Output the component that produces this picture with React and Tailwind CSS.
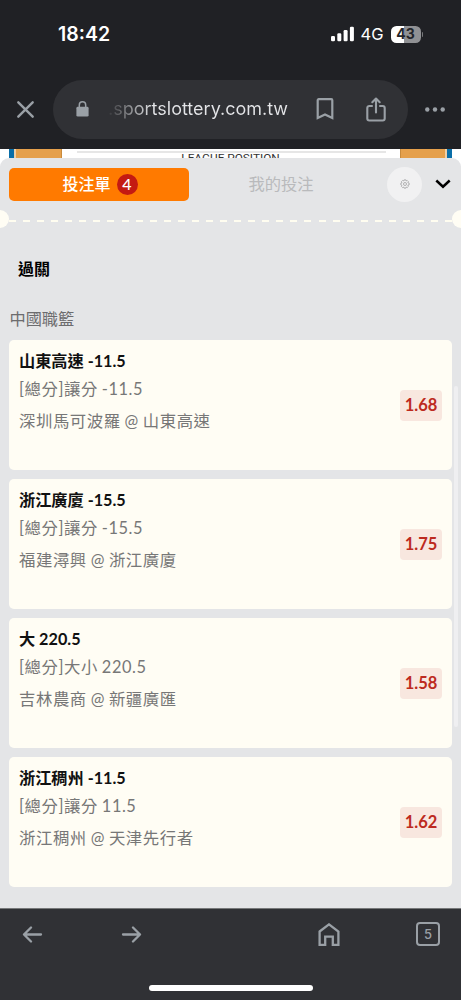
const bets = [
  { id: 1, pick: '山東高速 -11.5', market: '[總分]讓分 -11.5', match: '深圳馬可波羅 @ 山東高速', odds: '1.68' },
  { id: 2, pick: '浙江廣廈 -15.5', market: '[總分]讓分 -15.5', match: '福建潯興 @ 浙江廣廈', odds: '1.75' },
  { id: 3, pick: '大 220.5', market: '[總分]大小 220.5', match: '吉林農商 @ 新疆廣匯', odds: '1.58' },
  { id: 4, pick: '浙江稠州 -11.5', market: '[總分]讓分 11.5', match: '浙江稠州 @ 天津先行者', odds: '1.62' },
];

function StatusBar() {
  return (
    <div className="flex h-[68px] items-center pl-[58px] pr-[38px] text-white">
      <span className="pt-[2px] text-[19.5px] font-semibold leading-none">18:42</span>
      <svg className="ml-auto" width="24" height="16" viewBox="0 0 24 16" fill="currentColor">
        <rect x="0" y="10" width="4" height="5.3" rx="1.2" />
        <rect x="6.3" y="7.2" width="4" height="8.1" rx="1.2" />
        <rect x="12.6" y="4" width="4" height="11.3" rx="1.2" />
        <rect x="18.9" y="0.8" width="4" height="14.5" rx="1.2" />
      </svg>
      <span className="ml-[6px] w-[24px] pt-px text-[16.5px] font-normal leading-none">4G</span>
      <div className="ml-[6px] flex items-center">
        <div className="flex h-[17px] w-[30px] items-center justify-center rounded-[5.5px] bg-[linear-gradient(90deg,#fff_43%,#909194_43%)] text-[14px] font-bold leading-none text-[#242529]">
          43
        </div>
        <div className="ml-px h-[5px] w-[1.5px] rounded-r-full bg-[#77787b]"></div>
      </div>
    </div>
  );
}

function AddressBar() {
  return (
    <div className="flex h-[81px] items-center pt-[1px]">
      <svg className="ml-[16px]" width="19" height="19" viewBox="0 0 19 19" fill="none" stroke="#9aa0a6" strokeWidth="2.4" strokeLinecap="round">
        <path d="M2.3 2.3 16.7 16.7M16.7 2.3 2.3 16.7" />
      </svg>
      <div className="ml-[18px] flex h-[59px] w-[355px] items-center rounded-full bg-[#303135]">
        <svg className="ml-[23px]" width="13" height="16" viewBox="0 0 13 16">
          <rect x="0.4" y="5.8" width="12.2" height="9.8" rx="1.4" fill="#9aa0a6" />
          <path d="M3.3 6.5V4a3.2 3.2 0 0 1 6.4 0v2.5" fill="none" stroke="#9aa0a6" strokeWidth="1.5" />
        </svg>
        <span className="ml-[19px] w-[180px] whitespace-nowrap bg-[linear-gradient(90deg,#37383c_0%,#e4e5e8_25%)] bg-clip-text text-[18px] leading-[26px] text-transparent">
          .sportslottery.com.tw
        </span>
        <svg className="ml-[28px]" width="18" height="22" viewBox="0 0 18 22" fill="none" stroke="#9aa0a6" strokeWidth="2.2">
          <path d="M1.7 2.2a1 1 0 0 1 1-1h12.6a1 1 0 0 1 1 1V20L9 16.4 1.7 20z" />
        </svg>
        <svg className="ml-[32px]" width="20" height="25" viewBox="0 0 20 25" fill="none" stroke="#9aa0a6" strokeWidth="2.1" strokeLinecap="round" strokeLinejoin="round">
          <path d="M6 9H3.3A2 2 0 0 0 1.3 11v10.5a2 2 0 0 0 2 2h13.4a2 2 0 0 0 2-2V11a2 2 0 0 0-2-2H14" />
          <path d="M10 15.5V2M6.3 5.2 10 1.5l3.7 3.7" />
        </svg>
      </div>
      <svg className="ml-[17px]" width="20" height="5" viewBox="0 0 20 5" fill="#9aa0a6">
        <circle cx="2.3" cy="2.5" r="2.2" />
        <circle cx="10" cy="2.5" r="2.2" />
        <circle cx="17.7" cy="2.5" r="2.2" />
      </svg>
    </div>
  );
}

// Slice of the page left visible behind the bet slip
function PageBehind() {
  return (
    <div className="flex h-[17px] justify-between bg-white px-[9px]">
      <div className="flex">
        <div className="w-[5px] bg-[#0a6ea8]"></div>
        <div className="w-[2px] bg-[#f0d0a8]"></div>
        <div className="w-[46px] border-r border-[#c88a3c] bg-[#e5a04c]"></div>
      </div>
      <div className="w-[309px] pt-[2px] text-center">
        <div className="h-[2px] bg-[#e6e6e6]"></div>
        <div className="h-[13px] whitespace-nowrap pr-px font-['Roboto',sans-serif] text-[11.8px] leading-[11px] text-[#333]">LEAGUE POSITION</div>
      </div>
      <div className="flex">
        <div className="w-[45px] border-l border-[#c88a3c] bg-[#e5a04c]"></div>
        <div className="w-[2px] bg-[#f0d0a8]"></div>
        <div className="w-[5px] bg-[#0a6ea8]"></div>
      </div>
    </div>
  );
}

function SlipTabs() {
  return (
    <div className="flex h-[52px] items-center pl-[9px] pr-[10px]">
      <button className="flex h-[33px] w-[180px] items-center justify-center gap-[6px] rounded-[5px] bg-[#ff7a00] pl-[2px] text-[16px] font-medium text-white">
        投注單
        <span className="flex h-[21px] w-[21px] items-center justify-center rounded-full bg-[#c41a12] text-[16px] leading-none">4</span>
      </button>
      <button className="w-[184px] text-center text-[16.3px] text-[#b9babc]">我的投注</button>
      <button className="ml-[14px] flex h-[35px] w-[35px] items-center justify-center rounded-full bg-[#f1f1f2]">
        <svg width="10" height="10" viewBox="0 0 24 24" fill="none" stroke="#a0a0a1" strokeWidth="1.9">
          <path d="M10 2h4l.8 2.7 2.4-1.3 2.9 2.9-1.3 2.4L22 10v4l-3.2.8 1.3 2.9-2.9 2.9-2.4-1.3L14 22h-4l-.8-2.7-2.9 1.3-2.9-2.9 1.3-2.4L2 14v-4l2.7-.8-1.3-2.9 2.9-2.9 2.9 1.3z" />
          <circle cx="12" cy="12" r="3.6" />
        </svg>
      </button>
      <svg className="ml-auto" width="16" height="10" viewBox="0 0 16 10" fill="none" stroke="#000" strokeWidth="2.5">
        <path d="M1.3 1.5 8 7.7l6.7-6.2" />
      </svg>
    </div>
  );
}

function TicketDivider() {
  return (
    <div className="flex h-[18px] items-center overflow-hidden">
      <div className="-ml-[9px] h-[18px] w-[18px] shrink-0 rounded-full bg-[#fffdf4]"></div>
      <div className="mt-[3px] h-[2px] grow bg-[repeating-linear-gradient(90deg,#fffdf0_0px,#fffdf0_7px,transparent_7px,transparent_14.07px)]"></div>
      <div className="-mr-[9px] h-[18px] w-[18px] shrink-0 rounded-full bg-[#fffdf4]"></div>
    </div>
  );
}

function BetCard({ bet }) {
  return (
    <div className="flex h-[129.7px] items-center justify-between rounded-[5px] bg-[#fffdf4] px-[10px]">
      <div className="h-full pt-[7px] leading-[27px]">
        <div className="text-[16.2px] font-bold text-[#111]">{bet.pick}</div>
        <div className="mt-px text-[16.4px] tracking-[0.55px] text-[#777] [word-spacing:-0.8px]">{bet.market}</div>
        <div className="mt-[5px] text-[16.4px] tracking-[0.55px] text-[#777] [word-spacing:-0.8px]">{bet.match}</div>
      </div>
      <div className="mt-[1px] flex h-[31px] w-[42px] items-center justify-center rounded-[4px] bg-[#f8e7df] text-[16.5px] font-bold text-[#bd2a20]">
        {bet.odds}
      </div>
    </div>
  );
}

function BottomBar() {
  return (
    <div className="flex h-[92px] flex-col border-t border-[#77787a] bg-[#303135]">
      <div className="flex h-[51px] items-center text-[#9aa0a6]">
        <svg className="ml-[22px]" width="21" height="18" viewBox="0 0 21 18" fill="none" stroke="currentColor" strokeWidth="2.3" strokeLinecap="round" strokeLinejoin="round">
          <path d="M19 8.5H2M9 1.5 2 8.5l7 7" />
        </svg>
        <svg className="ml-[78px]" width="21" height="18" viewBox="0 0 21 18" fill="none" stroke="currentColor" strokeWidth="2.3" strokeLinecap="round" strokeLinejoin="round">
          <path d="M2 8.5h17M12 1.5l7 7-7 7" />
        </svg>
        <svg className="ml-[176px]" width="22" height="24" viewBox="0 0 22 24" fill="none" stroke="currentColor" strokeWidth="2.3">
          <path d="M1.6 8.5 11 1.4 20.4 8.5v13.4h-5.6v-8.2H7.2v8.2H1.6z" />
        </svg>
        <div className="-mt-px ml-[76px] flex h-[24px] w-[24px] items-center justify-center rounded-[4px] border-2 border-[#9aa0a6] text-[13px] font-medium leading-none">5</div>
      </div>
      <div className="mx-auto mt-[25px] h-[6px] w-[164px] rounded-full bg-white"></div>
    </div>
  );
}

export default function App() {
  return (
    <div className="flex h-[1000px] w-[461px] flex-col overflow-hidden bg-[#e4e5e7] font-['Inter','Noto_Sans_CJK_TC',sans-serif]">
      <header className="h-[149px] shrink-0 bg-[#202125]">
        <StatusBar />
        <AddressBar />
      </header>
      <PageBehind />
      <main className="relative -mt-[8px] flex grow flex-col rounded-t-[9px] bg-[#e4e5e7] font-['Lato','Noto_Sans_CJK_TC',sans-serif]">
        <SlipTabs />
        <TicketDivider />
        <h2 className="mt-[28px] pl-[18px] text-[16px] font-bold leading-[26px] text-black">過關</h2>
        <h3 className="mt-[24px] pl-[9.5px] text-[16.2px] leading-[26px] text-[#6c6c6e]">中國職籃</h3>
        <div className="mt-[8.4px] flex">
          <div className="ml-[9px] flex w-[443px] flex-col gap-[9.2px]">
            {bets.map((bet) => (
              <BetCard key={bet.id} bet={bet} />
            ))}
          </div>
          <div className="ml-[2px] mt-[46px] h-[341px] w-[4px] rounded-full bg-[#efeff1]"></div>
        </div>
      </main>
      <BottomBar />
    </div>
  );
}
